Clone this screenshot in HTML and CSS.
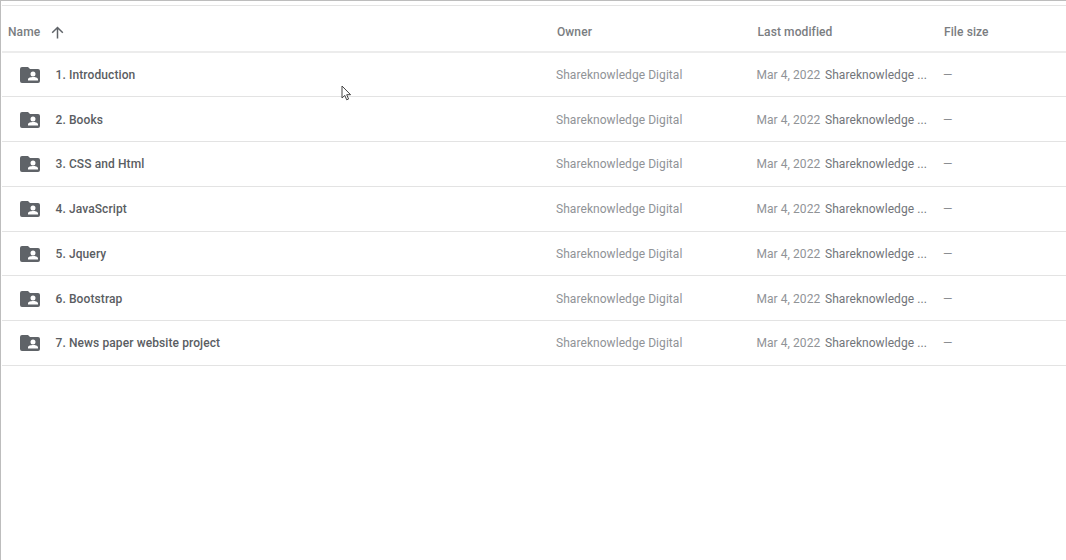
FILE: index.html
```html
<!DOCTYPE html>
<html lang="en">
<head>
<meta charset="utf-8">
<title>Files</title>
<link rel="stylesheet" href="styles.css">
</head>
<body>
<svg width="0" height="0" class="defs"><defs>
<symbol id="shared-folder" viewBox="0 0 20 16">
<path fill-rule="evenodd" d="M2 0h6l2 2h8a2 2 0 0 1 2 2v10a2 2 0 0 1-2 2H2a2 2 0 0 1-2-2V2a2 2 0 0 1 2-2zM13 4.6a2.5 2.5 0 1 0 0 5a2.5 2.5 0 0 0 0-5zM8 13.4h10v-1.1c0-1.6-3.3-2.3-5-2.3s-5 .7-5 2.3z"/>
</symbol>
</defs></svg>
<main class="page">
<div class="spacer"></div>
<div class="row head">
<div class="name-head"><span>Name</span>
<svg class="arrow" viewBox="0 0 13 13" width="13" height="13"><path d="M6.5 12.5V1.5M1.2 6.8L6.5 1.5l5.3 5.3" fill="none" stroke="#5f6368" stroke-width="1.5"/></svg></div>
<div>Owner</div><div>Last modified</div><div>File size</div>
</div>
<div class="row item"><div class="name"><svg class="folder"><use href="#shared-folder"/></svg>1. Introduction</div><div class="owner">Shareknowledge Digital</div><div class="mod"><span class="date">Mar 4, 2022</span><span class="by">Shareknowledge ...</span></div><div class="size">—</div></div>
<div class="row item"><div class="name"><svg class="folder"><use href="#shared-folder"/></svg>2. Books</div><div class="owner">Shareknowledge Digital</div><div class="mod"><span class="date">Mar 4, 2022</span><span class="by">Shareknowledge ...</span></div><div class="size">—</div></div>
<div class="row item"><div class="name"><svg class="folder"><use href="#shared-folder"/></svg>3. CSS and Html</div><div class="owner">Shareknowledge Digital</div><div class="mod"><span class="date">Mar 4, 2022</span><span class="by">Shareknowledge ...</span></div><div class="size">—</div></div>
<div class="row item"><div class="name"><svg class="folder"><use href="#shared-folder"/></svg>4. JavaScript</div><div class="owner">Shareknowledge Digital</div><div class="mod"><span class="date">Mar 4, 2022</span><span class="by">Shareknowledge ...</span></div><div class="size">—</div></div>
<div class="row item"><div class="name"><svg class="folder"><use href="#shared-folder"/></svg>5. Jquery</div><div class="owner">Shareknowledge Digital</div><div class="mod"><span class="date">Mar 4, 2022</span><span class="by">Shareknowledge ...</span></div><div class="size">—</div></div>
<div class="row item"><div class="name"><svg class="folder"><use href="#shared-folder"/></svg>6. Bootstrap</div><div class="owner">Shareknowledge Digital</div><div class="mod"><span class="date">Mar 4, 2022</span><span class="by">Shareknowledge ...</span></div><div class="size">—</div></div>
<div class="row item"><div class="name"><svg class="folder"><use href="#shared-folder"/></svg>7. News paper website project</div><div class="owner">Shareknowledge Digital</div><div class="mod"><span class="date">Mar 4, 2022</span><span class="by">Shareknowledge ...</span></div><div class="size">—</div></div>
</main>
<svg class="cursor" viewBox="0 0 11 16" width="11" height="16"><path d="M1 1v12l2.8-2.6 1.9 4.4 1.9-.8-1.9-4.3H9.6z" fill="#fff" stroke="#444" stroke-width="1"/></svg>
</body>
</html>
```
FILE: styles.css
```css
html, body { margin: 0; height: 100%; background: #fff; overflow: hidden; }
body { position: relative; font-family: Roboto, "Liberation Sans", sans-serif; font-size: 12px; letter-spacing: .06px; color: #5f6368; }
.defs { position: absolute; }
.page { height: 560px; box-sizing: border-box; border-top: 1px solid #bdbdbd; border-left: 1px solid #bdbdbd; padding-left: 1px; }
.spacer { height: 4px; border-bottom: 1px solid #e4e4e4; }
.row { display: grid; grid-template-columns: 554px 200.5px 186.5px 1fr; align-items: center; box-sizing: border-box; }
.head { height: 46.5px; border-bottom: 2px solid #ececec; color: #7a7d81; font-weight: 500; letter-spacing: .1px; padding-top: 7.5px; }
.head > div { padding-left: 1px; }
.name-head { display: flex; align-items: center; gap: 11px; padding-left: 6px !important; }
.arrow { display: block; }
.item { height: 44.75px; border-bottom: 1px solid #e3e3e3; padding-top: 1px; }
.name { display: flex; align-items: center; color: #5a5d62; font-weight: 500; letter-spacing: .1px; padding-left: 18px; }
.folder { width: 20px; height: 16px; margin-right: 15.5px; fill: #5f6368; }
.owner { color: #909397; }
.mod { display: flex; color: #909397; }
.date { width: 68.5px; flex: none; }
.by { color: #72757a; white-space: nowrap; }
.size { color: #8b8e92; }
.cursor { position: absolute; left: 341px; top: 85px; }
```
